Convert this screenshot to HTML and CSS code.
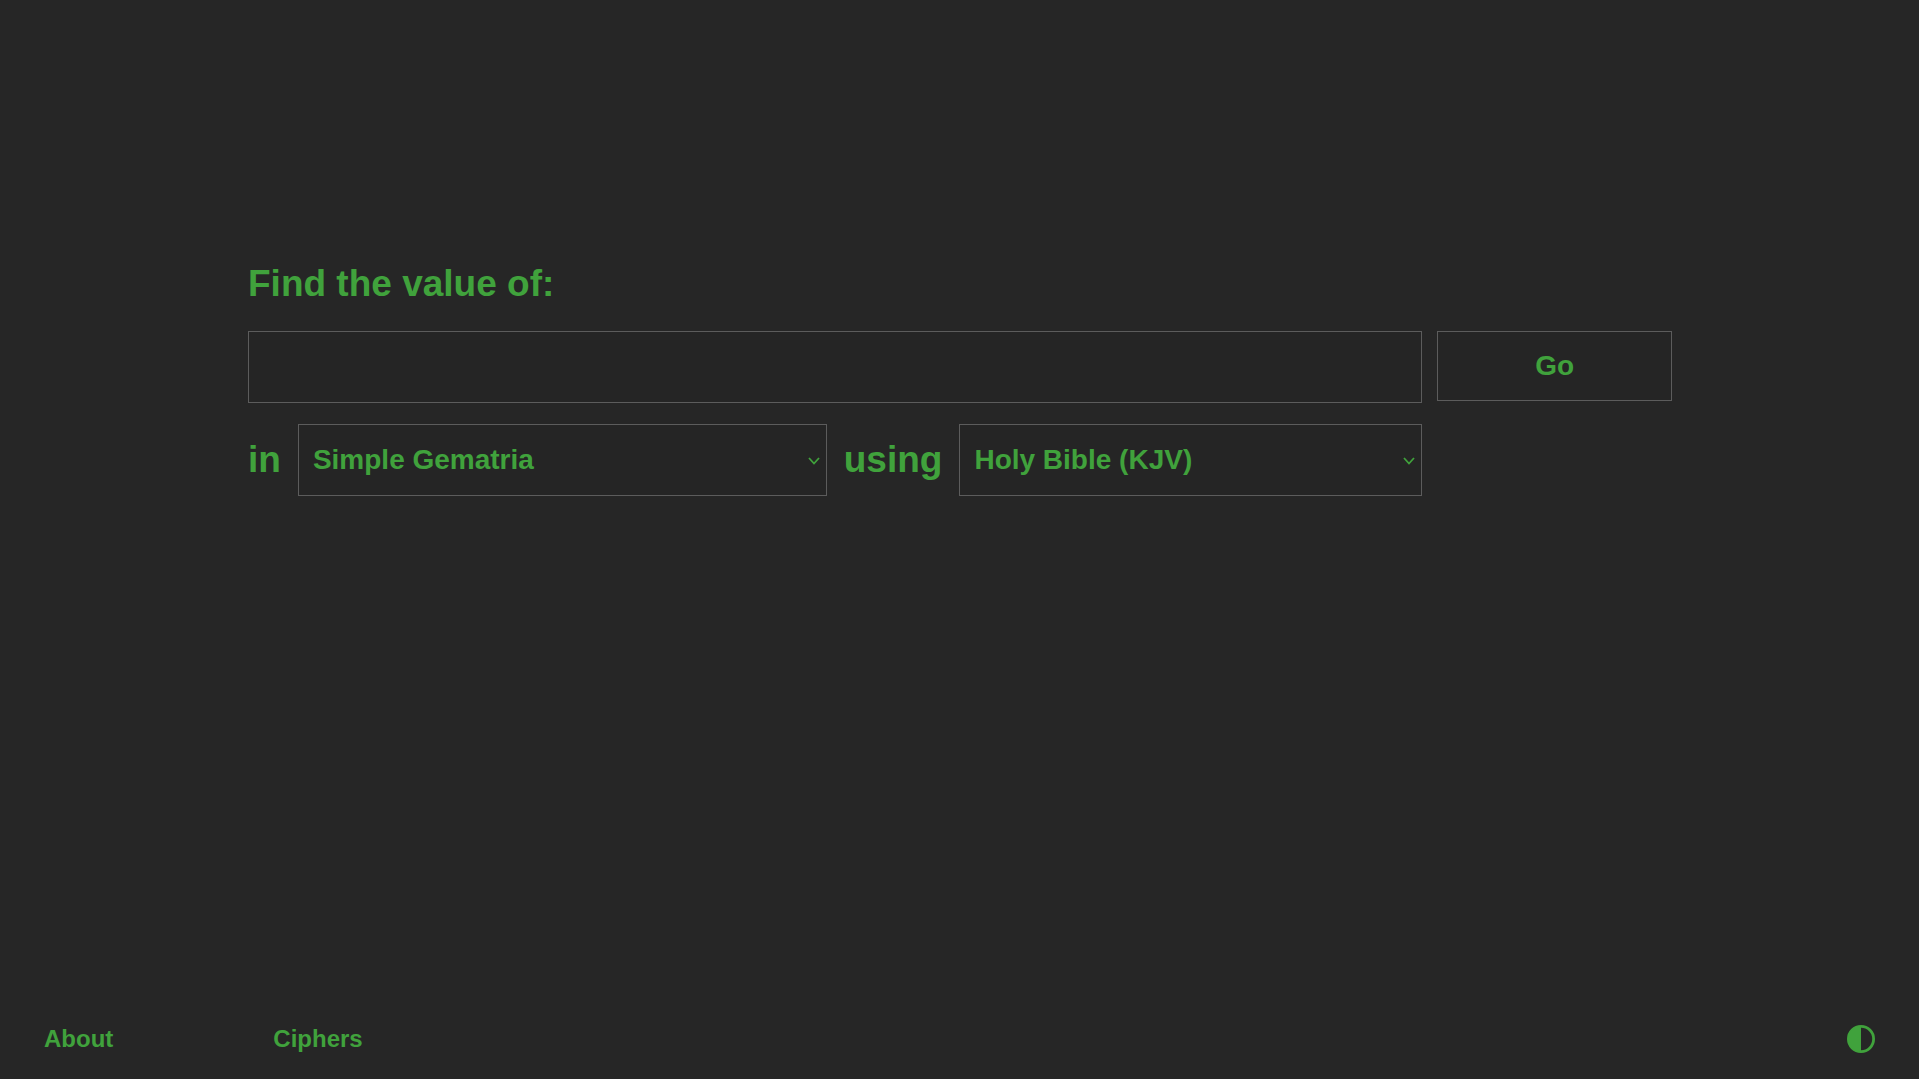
FILE: index.html
```html
<!DOCTYPE html>
<html lang="en">
<head>
    <meta charset="UTF-8">
    <meta name="viewport" content="width=device-width, initial-scale=1.0">
    <title>Gematria</title>
    <link rel="stylesheet" href="styles.css">
</head>
<body>
    <main>
        <form class="search">
            <label class="title" for="phrase">Find the value of:</label>
            <input class="field" type="text" id="phrase" autocomplete="off">
            <button class="go" type="submit">Go</button>

            <div class="options">
                <label for="cipher">in</label>
                <div class="select cipher">
                    <select class="field" id="cipher">
                        <option>Simple Gematria</option>
                    </select>
                    <svg class="chevron" width="12" height="8" viewBox="0 0 12 8">
                        <path d="M1 1 L6 6.5 L11 1" fill="none" stroke="currentColor" stroke-width="1.8"/>
                    </svg>
                </div>
                <label for="source">using</label>
                <div class="select source">
                    <select class="field" id="source">
                        <option>Holy Bible (KJV)</option>
                    </select>
                    <svg class="chevron" width="12" height="8" viewBox="0 0 12 8">
                        <path d="M1 1 L6 6.5 L11 1" fill="none" stroke="currentColor" stroke-width="1.8"/>
                    </svg>
                </div>
            </div>
        </form>
    </main>

    <footer>
        <nav>
            <a href="#about">About</a>
            <a href="#ciphers">Ciphers</a>
        </nav>
        <button class="theme" type="button" aria-label="Toggle theme">
            <svg width="28" height="28" viewBox="0 0 28 28">
                <circle cx="14" cy="14" r="12.6" fill="none" stroke="currentColor" stroke-width="2.8"/>
                <path d="M14 1 A13 13 0 0 0 14 27 Z" fill="currentColor"/>
            </svg>
        </button>
    </footer>
</body>
</html>
```
FILE: styles.css
```css
* {
    box-sizing: border-box;
}

body {
    display: flex;
    flex-direction: column;
    min-height: 100vh;
    margin: 0;
    background: #262626;
    color: #40a23c;
    font-family: "Liberation Sans", Arial, sans-serif;
    font-weight: bold;
}

main {
    flex: 1;
    padding: 260px 247px 0 248px;
}

.search {
    display: grid;
    grid-template-columns: 5fr 1fr;
    column-gap: 15px;
    align-items: start;
    font-size: 37px;
    line-height: 48px;
}

.title {
    grid-column: 1 / -1;
    margin-bottom: 23px;
}

.field,
.go {
    border: 1px solid #5c5c5c;
    border-radius: 0;
    background: #252525;
    color: inherit;
    font-family: inherit;
    font-size: 28px;
    font-weight: inherit;
}

.field {
    width: 100%;
    height: 72px;
    padding: 0 14px 2px;
    appearance: none;
}

.go {
    height: 70px;
    cursor: pointer;
}

.options {
    display: flex;
    align-items: center;
    gap: 17px;
    margin-top: 21px;
}

.select {
    display: flex;
    position: relative;
}

.cipher {
    flex: 8;
}

.source {
    flex: 7;
}

.chevron {
    position: absolute;
    top: 33px;
    right: 7px;
    pointer-events: none;
}

footer {
    display: flex;
    justify-content: space-between;
    align-items: center;
    padding: 0 44px 24px;
}

nav {
    display: flex;
    gap: 160px;
}

a {
    color: inherit;
    font-size: 24px;
    line-height: 32px;
    text-decoration: none;
}

.theme {
    display: flex;
    padding: 0;
    border: none;
    background: none;
    color: inherit;
    cursor: pointer;
}
```
